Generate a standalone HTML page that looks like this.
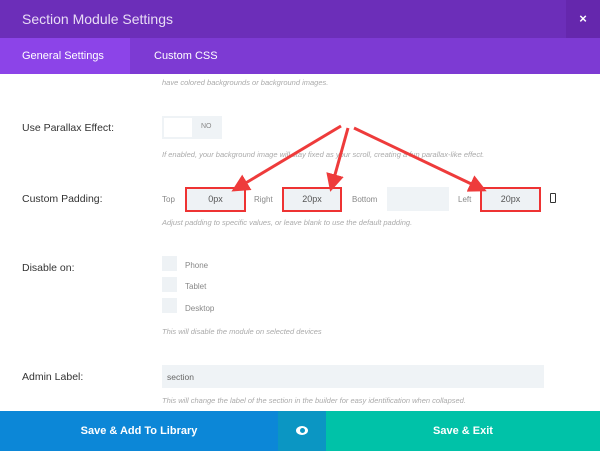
<!DOCTYPE html>
<html><head><meta charset="utf-8"><style>
*{margin:0;padding:0;box-sizing:border-box}
body{width:600px;height:451px;overflow:hidden;background:#fff;font-family:"Liberation Sans",sans-serif;position:relative}
.a{position:absolute}
.hdr{left:0;top:0;width:600px;height:38px;background:#6c2eb9}
.lbl{font-size:10.5px;color:#333;left:22px}
.desc{font-size:7.5px;color:#aaa;font-style:italic;left:162px}
.sm{font-size:8px;color:#888}
.in{background:#eff3f6}
.rb{border:2px solid #e33;background:#eef2f5;font-size:9px;color:#555;text-align:center;line-height:21px}
.cb{left:162px;width:15px;height:15px;background:#eef2f5}
</style></head><body>
<div class="a hdr"></div>
<div class="a" style="left:22px;top:11px;font-size:14px;color:#e8dcf5">Section Module Settings</div>
<div class="a" style="left:566px;top:0;width:34px;height:38px;background:#6527ad;color:#fff;font-size:13px;font-weight:bold;text-align:center;line-height:38px">×</div>
<div class="a" style="left:0;top:38px;width:600px;height:36px;background:#7d3ad3"></div>
<div class="a" style="left:0;top:38px;width:130px;height:36px;background:#8c44e8"></div>
<div class="a" style="left:22px;top:50px;font-size:11px;color:#fff">General Settings</div>
<div class="a" style="left:154px;top:50px;font-size:11px;color:#fff">Custom CSS</div>
<div class="a desc" style="top:78px">have colored backgrounds or background images.</div>
<div class="a lbl" style="top:122px">Use Parallax Effect:</div>
<div class="a in" style="left:162px;top:116px;width:60px;height:23px"></div>
<div class="a" style="left:164px;top:118px;width:28px;height:19px;background:#fff"></div>
<div class="a sm" style="left:201px;top:123px;font-size:7px">NO</div>
<div class="a desc" style="top:150px">If enabled, your background image will stay fixed as your scroll, creating a fun parallax-like effect.</div>
<div class="a lbl" style="top:193px">Custom Padding:</div>
<div class="a sm" style="left:162px;top:195px">Top</div>
<div class="a rb" style="left:185px;top:187px;width:61px;height:25px">0px</div>
<div class="a sm" style="left:254px;top:195px">Right</div>
<div class="a rb" style="left:282px;top:187px;width:60px;height:25px">20px</div>
<div class="a sm" style="left:352px;top:195px">Bottom</div>
<div class="a in" style="left:387px;top:187px;width:62px;height:24px"></div>
<div class="a sm" style="left:458px;top:195px">Left</div>
<div class="a rb" style="left:480px;top:187px;width:61px;height:25px">20px</div>
<div class="a" style="left:550px;top:193px;width:6px;height:10px;border:1.5px solid #333;border-radius:1px"></div>
<div class="a desc" style="top:218px">Adjust padding to specific values, or leave blank to use the default padding.</div>
<div class="a lbl" style="top:262px">Disable on:</div>
<div class="a cb" style="top:256px"></div><div class="a sm" style="left:185px;top:261px">Phone</div>
<div class="a cb" style="top:277px"></div><div class="a sm" style="left:185px;top:282px">Tablet</div>
<div class="a cb" style="top:298px"></div><div class="a sm" style="left:185px;top:304px">Desktop</div>
<div class="a desc" style="top:327px">This will disable the module on selected devices</div>
<div class="a lbl" style="top:371px">Admin Label:</div>
<div class="a in" style="left:162px;top:365px;width:382px;height:23px"></div>
<div class="a" style="left:167px;top:372px;font-size:8.5px;color:#666">section</div>
<div class="a desc" style="top:396px">This will change the label of the section in the builder for easy identification when collapsed.</div>
<div class="a" style="left:0;top:411px;width:278px;height:40px;background:#0c87d7;color:#fff;font-size:11px;font-weight:bold;text-align:center;line-height:40px">Save &amp; Add To Library</div>
<div class="a" style="left:278px;top:411px;width:48px;height:40px;background:#0b96c3"></div>
<div class="a" style="left:296px;top:426px;width:12px;height:9px;background:#fff;border-radius:50%"></div>
<div class="a" style="left:300px;top:428px;width:5px;height:5px;background:#0b96c3;border-radius:50%"></div>
<div class="a" style="left:326px;top:411px;width:274px;height:40px;background:#00c2a8;color:#fff;font-size:11px;font-weight:bold;text-align:center;line-height:40px">Save &amp; Exit</div>
<svg class="a" style="left:0;top:0" width="600" height="451">
<defs><marker id="m" markerWidth="6" markerHeight="6" refX="5" refY="3" orient="auto"><path d="M0,0 L6,3 L0,6z" fill="#ee3b3b"/></marker></defs>
<g stroke="#ee3b3b" stroke-width="3" fill="none" marker-end="url(#m)">
<line x1="341" y1="126" x2="234" y2="190"/>
<line x1="348" y1="128" x2="331" y2="189"/>
<line x1="354" y1="128" x2="484" y2="190"/>
</g></svg>
</body></html>
